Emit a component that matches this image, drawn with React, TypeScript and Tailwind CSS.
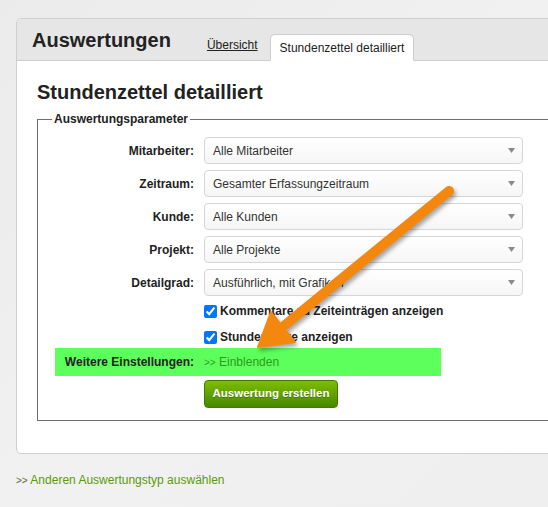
import React from "react";

const selects = [
  { label: "Mitarbeiter:", value: "Alle Mitarbeiter" },
  { label: "Zeitraum:", value: "Gesamter Erfassungzeitraum" },
  { label: "Kunde:", value: "Alle Kunden" },
  { label: "Projekt:", value: "Alle Projekte" },
  { label: "Detailgrad:", value: "Ausführlich, mit Grafiken" },
];

function SelectBox({ value }: { value: string }) {
  return (
    <div className="flex h-[27px] w-[319px] items-center justify-between rounded-[4px] border border-[#d6d6d6] bg-gradient-to-b from-[#ffffff] to-[#f6f6f6] pl-[8px] pr-[7px] text-[12px] text-[#333]">
      <span>{value}</span>
      <svg width="7" height="5" viewBox="0 0 7 5">
        <path d="M0 0 L7 0 L3.5 5 Z" fill="#8a8a8a" />
      </svg>
    </div>
  );
}

export default function App() {
  return (
    <div className="relative min-h-[507px] w-full overflow-hidden bg-gradient-to-br from-[#ebebeb] via-[#f1f1f1] to-[#efefef] pl-[16px] pt-[18px] font-['Liberation_Sans',Arial,sans-serif] text-[#222]">
      <div className="w-[600px] overflow-hidden rounded-[5px] border border-[#cfcfcf] bg-white">
        {/* header */}
        <div className="flex h-[42px] items-end border-b border-[#cccccc] bg-[#e6e6e6]">
          <div className="mb-[8px] ml-[15px] text-[20px] font-bold leading-[24px] text-[#222]">
            Auswertungen
          </div>
          <a className="mb-[8px] ml-[36px] text-[12px] leading-[14px] text-[#222] underline">
            Übersicht
          </a>
          <div className="-mb-px ml-[12px] flex h-[27px] items-center rounded-t-[5px] border border-b-white border-[#cccccc] bg-white px-[9px] text-[12px] text-[#222]">
            Stundenzettel detailliert
          </div>
        </div>

        {/* content */}
        <div className="pb-[32px] pl-[20px] pt-[19px]">
          <h2 className="text-[20px] font-bold leading-[24px] text-[#222]">Stundenzettel detailliert</h2>

          <fieldset className="mt-[8px] w-[560px] border border-[#6e6e6e] pb-[12px] pl-[17px] pt-[10px]">
            <legend className="-ml-[3px] px-[2px] text-[12px] font-bold leading-[15px] text-[#222]">
              Auswertungsparameter
            </legend>

            <div className="flex flex-col gap-[6px]">
              {selects.map((s) => (
                <div key={s.label} className="flex items-center">
                  <div className="w-[139px] text-right text-[12px] font-bold text-[#222]">{s.label}</div>
                  <div className="ml-[10px]">
                    <SelectBox value={s.value} />
                  </div>
                </div>
              ))}
            </div>

            <label className="ml-[149px] mt-[5px] flex h-[20px] items-center gap-[3px] text-[12px] font-bold text-[#222]">
              <input type="checkbox" checked readOnly className="m-0 h-[13px] w-[13px] accent-[#0075ff]" />
              Kommentare zu Zeiteinträgen anzeigen
            </label>
            <label className="ml-[149px] mt-[6px] flex h-[20px] items-center gap-[3px] text-[12px] font-bold text-[#222]">
              <input type="checkbox" checked readOnly className="m-0 h-[13px] w-[13px] accent-[#0075ff]" />
              Stundensätze anzeigen
            </label>

            <div className="mt-[1px] flex h-[28px] w-[386px] items-center bg-[#5cff5c]">
              <div className="w-[139px] text-right text-[12px] font-bold text-[#222]">Weitere Einstellungen:</div>
              <a className="ml-[10px] text-[12px] text-[#2f9a1c]">
                <span className="text-[10px]">&gt;&gt;</span> Einblenden
              </a>
            </div>

            <button className="ml-[149px] mt-[4px] flex h-[28px] w-[134px] items-center justify-center rounded-[4px] border border-[#3f7d00] bg-gradient-to-b from-[#7dbd00] to-[#468800] text-[11.5px] font-bold text-white [text-shadow:0_1px_0_rgba(0,0,0,0.25)]">
              Auswertung erstellen
            </button>
          </fieldset>
        </div>
      </div>

      <a className="mt-[19px] block text-[12px] leading-[14px] text-[#5a9a0e]">
        <span className="text-[10px] text-[#556b2f]">&gt;&gt;</span> Anderen Auswertungstyp auswählen
      </a>

      {/* annotation arrow */}
      <svg
        className="pointer-events-none absolute left-0 top-0 drop-shadow-[2px_3px_2px_rgba(0,0,0,0.35)]"
        width="548"
        height="507"
        viewBox="0 0 548 507"
      >
        <line x1="449" y1="191" x2="285" y2="325" stroke="#f4880e" strokeWidth="10" strokeLinecap="round" />
        <polygon points="258,347 295,342 271,312" fill="#f4880e" stroke="#f4880e" strokeWidth="2" strokeLinejoin="round" />
      </svg>
    </div>
  );
}
